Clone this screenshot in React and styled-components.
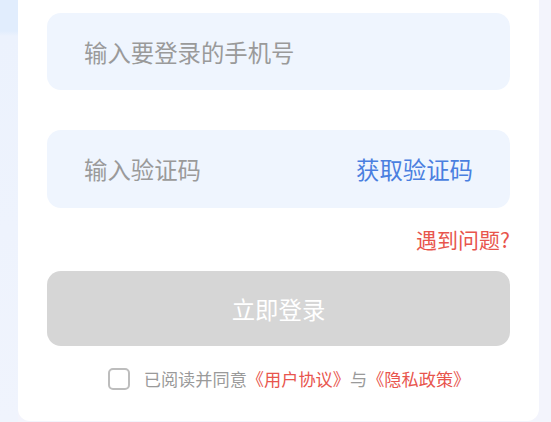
import React, { useState } from 'react';
import styled, { createGlobalStyle } from 'styled-components';

const GlobalStyle = createGlobalStyle`
  html, body {
    margin: 0;
    padding: 0;
  }
  body {
    font-family: "Noto Sans CJK SC", "Noto Sans", sans-serif;
    background: #f3f4fc;
  }
`;

const Page = styled.div`
  width: 551px;
  height: 422px;
  overflow: hidden;
  display: flex;
  background-color: #f3f4fc;
  background-image: linear-gradient(180deg, #e1edfd 0, #e1edfd 31px, #ecf2fd 36px, #f0f4fd 100%);
  background-size: 18px 100%;
  background-repeat: no-repeat;
`;

const Card = styled.div`
  margin-left: 18px;
  width: 521px;
  height: 421px;
  box-sizing: border-box;
  background: #fff;
  border-radius: 0 0 12px 12px;
  padding: 13px 29px 0;
  display: flex;
  flex-direction: column;
`;

const Field = styled.label`
  height: ${p => p.$h}px;
  margin-bottom: ${p => p.$mb || 0}px;
  border-radius: 14px;
  background: #eff5fe;
  display: flex;
  align-items: center;
  padding: 0 37px;
  box-sizing: border-box;
`;

const Input = styled.input`
  flex: 1;
  min-width: 0;
  border: none;
  outline: none;
  background: transparent;
  font-family: inherit;
  font-size: 23.4px;
  color: #333;
  padding: 0;

  &::placeholder {
    color: #9a9a9a;
  }
`;

const CodeLink = styled.span`
  font-size: 23.4px;
  color: #4a7fe0;
  white-space: nowrap;
`;

const HelpRow = styled.div`
  margin-top: 18px;
  height: 26px;
  display: flex;
  justify-content: flex-end;
  align-items: center;
  font-size: 21px;
  color: #e8554d;
`;

const LoginButton = styled.button`
  margin-top: 19px;
  height: 75px;
  border: none;
  border-radius: 14px;
  background: #d6d6d6;
  color: #fff;
  font-family: inherit;
  font-size: 23.4px;
  cursor: pointer;
`;

const Agree = styled.div`
  margin-top: 20px;
  padding-left: 21px;
  display: flex;
  align-items: center;
  justify-content: center;
  gap: 14px;
  font-size: 17.2px;
  color: #9a9a9a;
`;

const Check = styled.span`
  width: 22px;
  height: 22px;
  box-sizing: border-box;
  border: 2px solid ${p => (p.$on ? '#4a7fe0' : '#bdbdbd')};
  border-radius: 5px;
  background: ${p => (p.$on ? '#4a7fe0' : '#fff')};
  cursor: pointer;
`;

const Red = styled.span`
  color: #e8554d;
`;

const App = () => {
  const [agree, setAgree] = useState(false);

  return (
    <>
      <GlobalStyle />
      <Page>
        <Card>
          <Field $h={77} $mb={40}>
            <Input placeholder="输入要登录的手机号" />
          </Field>
          <Field $h={78}>
            <Input placeholder="输入验证码" />
            <CodeLink>获取验证码</CodeLink>
          </Field>
          <HelpRow>遇到问题?</HelpRow>
          <LoginButton>立即登录</LoginButton>
          <Agree>
            <Check $on={agree} onClick={() => setAgree(!agree)} />
            <span>
              已阅读并同意<Red>《用户协议》</Red>与<Red>《隐私政策》</Red>
            </span>
          </Agree>
        </Card>
      </Page>
    </>
  );
};

export default App;
